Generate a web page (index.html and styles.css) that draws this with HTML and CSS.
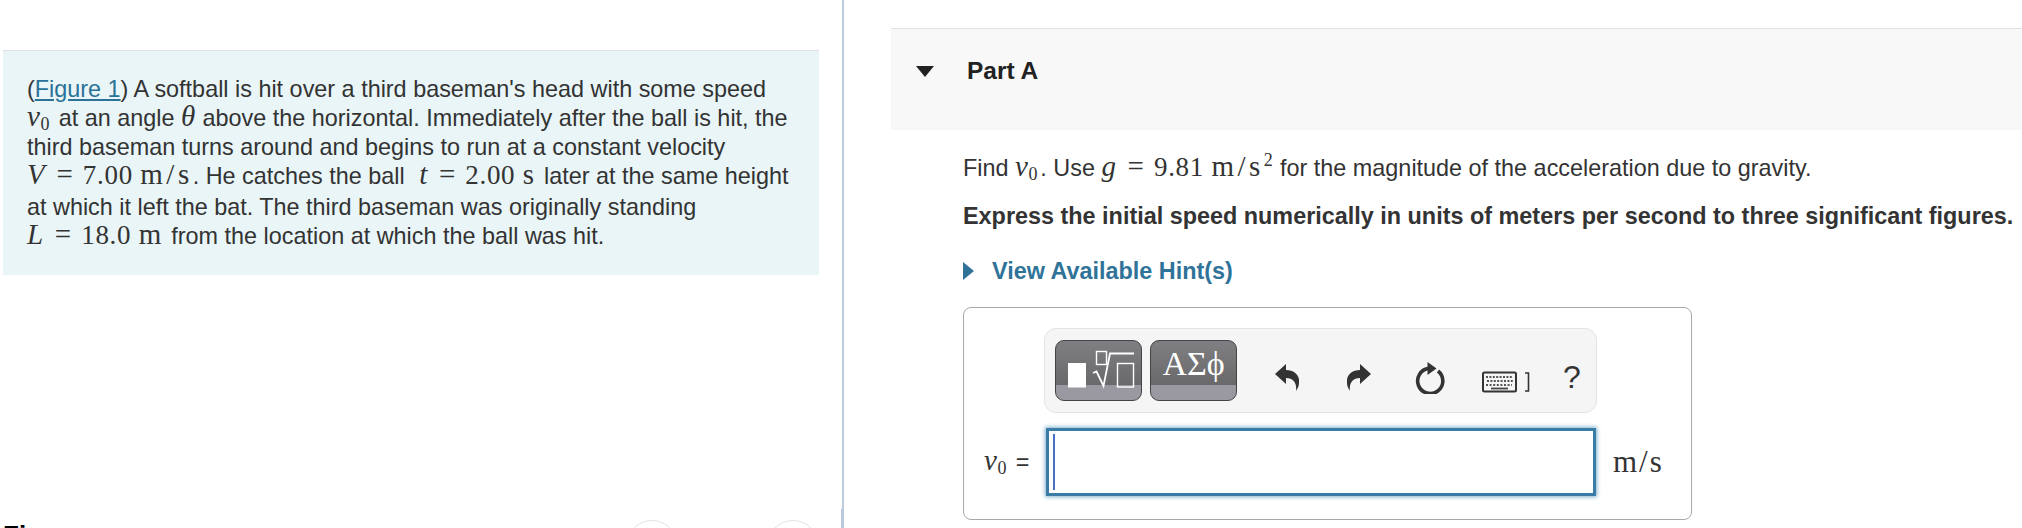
FILE: index.html
```html
<!DOCTYPE html>
<html lang="en">
<head>
<meta charset="utf-8">
<title>Part A</title>
<link rel="stylesheet" href="styles.css">
</head>
<body>
<div class="page">
  <section class="left">
    <div class="intro">
      <span class="line">(<a class="link" href="#">Figure 1</a>) A softball is hit over a third baseman's head with some speed</span>
      <span class="line"><span class="math"><i>v</i><sub>0</sub></span> at an angle <span class="math"><i>θ</i></span> above the horizontal. Immediately after the ball is hit, the</span>
      <span class="line">third baseman turns around and begins to run at a constant velocity</span>
      <span class="line tall"><span class="math"><i>V</i><span class="eq">=</span>7.00 <span class="unit">m/s</span></span>. He catches the ball <span class="math t-var"><i>t</i><span class="eq">=</span>2.00 <span class="unit">s</span></span> later at the same height</span>
      <span class="line">at which it left the bat. The third baseman was originally standing</span>
      <span class="line"><span class="math"><i>L</i><span class="eq">=</span>18.0 <span class="unit">m</span></span> from the location at which the ball was hit.</span>
    </div>
    <div class="figure-row">
      <h2 class="figure-title">Figure</h2>
      <span class="nav-circle"></span>
      <span class="nav-circle"></span>
    </div>
    <span class="divider-handle"></span>
  </section>
  <main class="right">
    <header class="part-head">
      <span class="tri-down"></span>
      <h1 class="part-title">Part A</h1>
    </header>
    <div class="part-body">
      <p class="find">Find <span class="math"><i>v</i><sub>0</sub></span>. Use <span class="math"><i>g</i><span class="eq">=</span>9.81 <span class="unit">m/s</span><sup>2</sup></span> for the magnitude of the acceleration due to gravity.</p>
      <p class="express">Express the initial speed numerically in units of meters per second to three significant figures.</p>
      <div class="hint"><span class="tri-right"></span><a class="hint-link" href="#">View Available Hint(s)</a></div>
      <div class="answer">
        <div class="toolbar">
          <button class="tpl-btn" type="button">
            <svg class="tpl-icon" width="87" height="61" viewBox="0 0 87 61">
              <rect x="13" y="23" width="18" height="24.5" fill="#fff"/>
              <rect x="41.5" y="11.5" width="10" height="13" fill="none" stroke="#fff" stroke-width="1.4"/>
              <path d="M38 33 L41.5 31.5 L48.5 46 L55 13.5 H79" fill="none" stroke="#fff" stroke-width="1.8"/>
              <rect x="62.5" y="23.5" width="16" height="23.5" fill="none" stroke="#fff" stroke-width="1.4"/>
            </svg>
          </button>
          <button class="tpl-btn greek" type="button">ΑΣϕ</button>
          <div class="tools">
            <svg class="tool undo" width="24" height="27" viewBox="0 0 24 27"><path d="M0 10 L11 0 V6 C20 6 25 12 24 19 C24 23 22 25 21 27 C22 20 19 14 11 14 V20 Z" fill="#333"/></svg>
            <svg class="tool redo" width="24" height="27" viewBox="0 0 24 27"><path d="M24 10 L13 0 V6 C4 6 -1 12 0 19 C0 23 2 25 3 27 C2 20 5 14 13 14 V20 Z" fill="#333"/></svg>
            <svg class="tool reload" width="30" height="32" viewBox="0 0 30 32"><path d="M23 9 A12.6 12.6 0 1 1 14 6.4" fill="none" stroke="#333" stroke-width="3.6"/><path d="M12.5 0 L21.5 6.5 L12.5 13 Z" fill="#333"/></svg>
            <svg class="tool keyboard" width="48" height="22" viewBox="0 0 48 22">
              <rect x="1" y="1.5" width="33" height="19" rx="1.5" fill="#f5f5f5" stroke="#333" stroke-width="2"/>
              <path d="M4 6 H31" stroke="#555" stroke-width="2" stroke-dasharray="2 1.4" fill="none"/>
              <path d="M5 10 H31" stroke="#555" stroke-width="2" stroke-dasharray="2 1.4" fill="none"/>
              <path d="M4 14 H30" stroke="#555" stroke-width="1.8" stroke-dasharray="2 1.6" fill="none"/>
              <path d="M9 17.5 H26" stroke="#444" stroke-width="1.8" fill="none"/>
              <path d="M43 2 H46.5 V20 H43" stroke="#333" stroke-width="1.6" fill="none"/>
            </svg>
            <span class="help">?</span>
          </div>
        </div>
        <div class="input-row">
          <span class="input-label"><span class="math"><i>v</i><sub>0</sub></span> =</span>
          <div class="input-box"><span class="caret"></span></div>
          <span class="units math">m/s</span>
        </div>
      </div>
    </div>
  </main>
</div>
</body>
</html>
```
FILE: styles.css
```css
* { box-sizing: border-box; }
html, body { margin: 0; padding: 0; background: #fff; }
body { font-family: "Liberation Sans", Arial, sans-serif; color: #333; }
.page { display: flex; width: 2022px; height: 528px; overflow: hidden; }

.left { position: relative; flex: 0 0 844px; height: 528px; padding: 50px 0 0 3px; border-right: 2px solid #bccadd; }
.intro { width: 816px; height: 225px; padding: 24px 0 0 24px; background: #e9f5f7; border-top: 1px solid #dde4e8; font-size: 23.4px; line-height: 29px; }
.line { display: block; height: 29px; white-space: nowrap; }
.line.tall { height: 31px; }
.link { color: #2b7298; text-decoration: underline; }
.math { font-family: "Liberation Serif", "Times New Roman", serif; font-size: 27px; line-height: 0; letter-spacing: .7px; }
.math i { font-style: italic; font-size: 29px; }
.math sub { font-size: 18px; line-height: 0; vertical-align: -4px; margin-right: 2px; }
.math sup { font-size: 18px; line-height: 0; vertical-align: 10px; }
.eq { margin: 0 10px 0 11px; font-size: 29px; line-height: 0; letter-spacing: 0; }
.unit { font-size: 29px; letter-spacing: 3.5px; }
.t-var { margin-left: 8px; }

.figure-row { display: flex; align-items: flex-start; margin-top: 245px; width: 816px; }
.figure-title { flex: 1; margin: 0; font-size: 26px; line-height: 30px; font-weight: 700; color: #000; }
.nav-circle { width: 52px; height: 52px; border: 1px solid #e3e3e3; border-radius: 50%; }
.nav-circle + .nav-circle { margin-left: 89px; }
.divider-handle { position: absolute; right: -2px; bottom: 0; width: 3px; height: 19px; background: #b9c9e0; }

.right { flex: 1; padding: 28px 0 0 47px; min-width: 0; }
.part-head { display: flex; align-items: flex-start; gap: 33px; height: 102px; padding: 28px 0 0 25px; background: #f8f8f8; border-top: 1px solid #e2e2e2; }
.tri-down { width: 0; height: 0; margin-top: 9px; border-left: 9.5px solid transparent; border-right: 9.5px solid transparent; border-top: 11px solid #222; }
.part-title { margin: 0; font-size: 24.5px; line-height: 28px; font-weight: 700; color: #222; }

.part-body { padding-left: 72px; }
.find { margin: 23px 0 0; font-size: 23.4px; line-height: 30px; white-space: nowrap; }
.express { margin: 18px 0 0; font-size: 23.4px; line-height: 30px; font-weight: 700; white-space: nowrap; }
.hint { display: flex; align-items: center; gap: 18px; margin-top: 25px; height: 30px; }
.tri-right { width: 0; height: 0; border-top: 9px solid transparent; border-bottom: 9px solid transparent; border-left: 11px solid #2f7399; }
.hint-link { color: #2f7399; font-size: 23.4px; font-weight: 700; text-decoration: none; }

.answer { width: 729px; height: 213px; margin-top: 21px; padding: 20px 0 0 0; border: 1.5px solid #aaa; border-radius: 8px; }
.toolbar { display: flex; align-items: center; gap: 8px; width: 553px; height: 85px; margin-left: 80px; padding-left: 10px; background: #f5f5f5; border: 1px solid #e4e4e4; border-radius: 12px; }
.tpl-btn { width: 87px; height: 61px; margin: 0; padding: 0; border: 1px solid #444; border-radius: 9px; background: linear-gradient(to bottom, #7f7f83 0, #69696b 74%, #9a99a1 74%, #9a99a1 100%); color: #fff; display: block; overflow: hidden; }
.tpl-icon { display: block; margin: -1px; }
.greek { font-family: "Liberation Serif", serif; font-size: 34px; line-height: 44px; padding-bottom: 13px; }
.tools { display: flex; align-items: center; margin-left: 30px; margin-top: 13px; }
.undo { margin-right: 48px; }
.redo { margin-right: 44px; }
.reload { margin-right: 37px; margin-top: 1px; }
.keyboard { margin-top: 9px; margin-right: 33px; }
.help { font-size: 32px; line-height: 30px; color: #333; }

.input-row { display: flex; align-items: center; margin-top: 15px; }
.input-label { width: 82px; padding-left: 20px; font-size: 23.4px; white-space: nowrap; }
.input-box { display: flex; width: 550px; height: 68px; padding: 3px 0 3px 4px; background: #fff; border: 3px solid #3a7ca5; box-shadow: 0 0 4px 1px #7fb0cb; }
.caret { display: block; width: 1.5px; height: 100%; background: #4a6fc4; }
.units { margin-left: 17px; font-size: 31px; letter-spacing: 2px; }
```
